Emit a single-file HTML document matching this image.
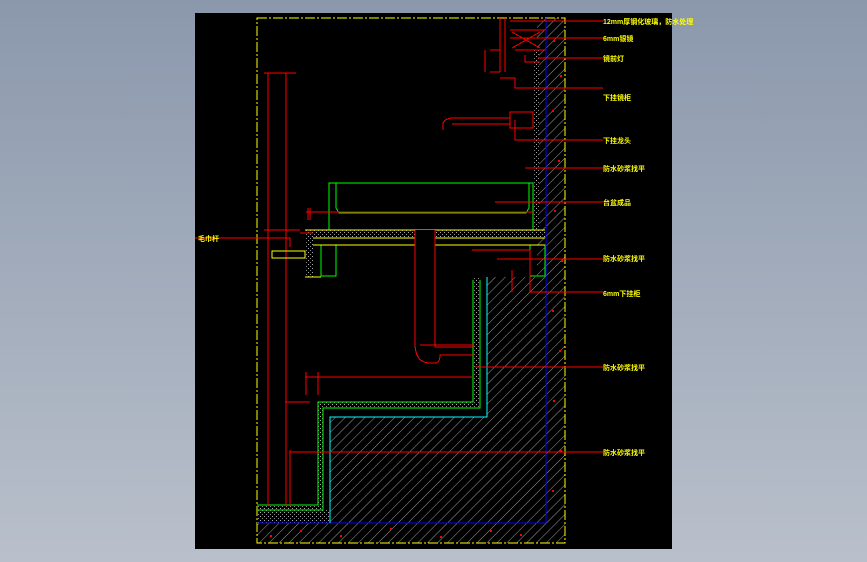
<!DOCTYPE html>
<html><head><meta charset="utf-8"><style>
html,body{margin:0;padding:0;width:867px;height:562px;overflow:hidden;background:linear-gradient(#8b98ac,#b9c0cb);}
svg{position:absolute;left:0;top:0}
text{font-family:"Liberation Sans","Noto Sans CJK SC",sans-serif;font-size:7px;font-weight:bold;fill:#ffff00}
</style></head><body>
<svg width="867" height="562" viewBox="0 0 867 562" shape-rendering="crispEdges">
<defs>
<pattern id="h" width="7" height="7" patternUnits="userSpaceOnUse" patternTransform="rotate(45)">
<line x1="0" y1="0" x2="0" y2="7" stroke="#9a9a9a" stroke-width="1"/>
</pattern>
<pattern id="s" width="4" height="4" patternUnits="userSpaceOnUse">
<rect width="4" height="4" fill="#000"/><rect x="0" y="0" width="1" height="1" fill="#aaa"/><rect x="2" y="2" width="1" height="1" fill="#888"/>
</pattern>
</defs>
<rect x="195" y="13" width="477" height="536" fill="#000"/>
<path d="M537 18H565V543H257V523H330V417H487V277H537Z" fill="url(#h)"/>
<rect x="257" y="510" width="73" height="13" fill="url(#s)"/>
<path d="M473 277V402H318V505H257V510H323V408H480V277Z" fill="url(#s)"/>
<rect x="533" y="50" width="6" height="180" fill="url(#s)"/>
<g fill="#f00">
<rect x="553" y="40" width="2" height="2"/><rect x="560" y="75" width="2" height="2"/><rect x="552" y="110" width="2" height="2"/><rect x="558" y="160" width="2" height="2"/><rect x="554" y="210" width="2" height="2"/><rect x="561" y="260" width="2" height="2"/><rect x="552" y="310" width="2" height="2"/><rect x="559" y="350" width="2" height="2"/><rect x="553" y="400" width="2" height="2"/><rect x="560" y="450" width="2" height="2"/><rect x="552" y="490" width="2" height="2"/>
<rect x="300" y="530" width="2" height="2"/><rect x="340" y="535" width="2" height="2"/><rect x="390" y="528" width="2" height="2"/><rect x="440" y="536" width="2" height="2"/><rect x="490" y="530" width="2" height="2"/><rect x="520" y="534" width="2" height="2"/><rect x="270" y="535" width="2" height="2"/>
</g>
<rect x="257" y="18" width="308" height="525" fill="none" stroke="#ff0" stroke-width="1" stroke-dasharray="10,2,2,2"/>
<path d="M546 18V523H257" fill="none" stroke="#0000ff" stroke-width="1.2"/>
<path d="M487 277V417H330V523" fill="none" stroke="#00ffff" stroke-width="1"/>
<g fill="none" stroke="#0f0" stroke-width="1">
<path d="M473 280V402H318V505H257"/><path d="M480 280V408H323V510H257"/>
<rect x="329" y="183" width="204" height="47"/>
<path d="M336 183V208L339 213H526L529 208V183"/>
<rect x="321" y="245" width="15" height="31"/><rect x="530" y="245" width="15" height="31"/>
</g>
<rect x="305" y="230" width="240" height="8" fill="url(#s)"/>
<rect x="305" y="230" width="8" height="47" fill="url(#s)"/>
<path d="M305 230H545M313 238H545M313 245H545M305 277H321" stroke="#ff0" stroke-width="0.7" fill="none"/>
<rect x="415" y="230" width="20" height="47" fill="#000"/>
<g fill="none" stroke="#f00" stroke-width="1">
<path d="M268 73V505M286 73V505M264 73H296M264 230H300M300 233H313"/>
<path d="M306 212H533M308 208V220M310 208V220"/>
<path d="M415 230V343Q415 363 430 363H435Q440 363 440 355H473M435 230V347H473M420 345H473"/>
<path d="M305 377H472M306 372V395M318 372V395M285 402H310"/>
<path d="M290 450V505"/>
<path d="M195 238H290V247"/>
<path d="M443 130V123Q446 118 452 118H510M452 124H510"/>
<rect x="510" y="112" width="23" height="16"/>
<path d="M515 120V140H603M472 250H530V292H603"/>
<path d="M512 270V292"/>
<path d="M505 18V72M500 18V72M490 50H500M490 72H500M485 50V72"/>
<path d="M500 78H515V88H603M510 30H545M515 50H545M512 32L540 48M540 32L512 48"/>
<path d="M525 55V62H540"/>
<path d="M510 21H603M510 38H603M538 58H603M525 168H603M495 202H603M497 259H603M475 367H603M290 452H603"/>
</g>
<g fill="none" stroke="#ff0" stroke-width="1"><rect x="272" y="251" width="33" height="7"/></g>
<text x="603" y="24">12mm厚钢化玻璃，防水处理</text>
<text x="603" y="41">6mm银镜</text>
<text x="603" y="61">镜前灯</text>
<text x="603" y="100">下挂镜柜</text>
<text x="603" y="143">下挂龙头</text>
<text x="603" y="171">防水砂浆找平</text>
<text x="603" y="205">台盆成品</text>
<text x="603" y="261">防水砂浆找平</text>
<text x="603" y="296">6mm下挂柜</text>
<text x="603" y="370">防水砂浆找平</text>
<text x="603" y="455">防水砂浆找平</text>
<text x="198" y="241">毛巾杆</text>
</svg>
</body></html>
